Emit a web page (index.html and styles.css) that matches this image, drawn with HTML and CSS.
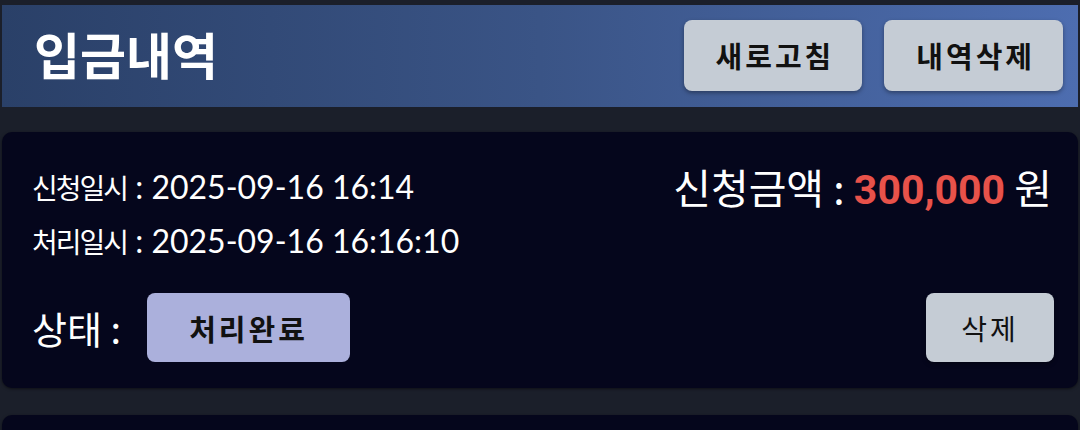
FILE: index.html
```html
<!DOCTYPE html>
<html>
<head>
    <title>입금내역</title>
    <meta name="viewport" content="width=device-width, initial-scale=1">
    <link rel="stylesheet" href="styles.css">
</head>
<body>
    <div class="header">
        <h1>입금내역</h1>
        <div class="header-actions">
            <button class="btn btn-bold">새로고침</button>
            <button class="btn btn-bold">내역삭제</button>
        </div>
    </div>

    <div class="list">
        <div class="card">
            <div class="card-top">
                <div class="dates">
                    <div class="line"><span class="label">신청일시</span> : 2025-09-16 16:14</div>
                    <div class="line"><span class="label">처리일시</span> : 2025-09-16 16:16:10</div>
                </div>
                <div class="amount">신청금액 : <span class="money">300,000</span> 원</div>
            </div>
            <div class="card-bottom">
                <div class="status">
                    <span class="status-label">상태 :</span>
                    <span class="badge">처리완료</span>
                </div>
                <button class="btn btn-small">삭제</button>
            </div>
        </div>
        <div class="card"></div>
    </div>
</body>
</html>
```

FILE: styles.css
```css
body {
    margin: 0;
    padding: 5px 2px 0;
    background-color: #1b1f2a;
    font-family: 'Lato', 'Noto Sans CJK KR', sans-serif;
    color: #ffffff;
    overflow: hidden;
}
.header {
    height: 102px;
    display: flex;
    align-items: center;
    justify-content: space-between;
    padding: 0 15px 0 32px;
    background: linear-gradient(90deg, #2a4068 0%, #3a5486 50%, #4d6db0 100%);
}
h1 {
    margin: 0;
    font-family: 'Noto Sans CJK KR', sans-serif;
    font-size: 50px;
    font-weight: bold;
    padding-bottom: 6px;
}
.header-actions {
    display: flex;
    gap: 22px;
    padding-bottom: 2px;
}
.btn {
    background-color: #c5ccd5;
    color: #111111;
    border: none;
    border-radius: 8px;
    font-family: 'Noto Sans CJK KR', sans-serif;
    font-size: 29px;
    letter-spacing: 3px;
    cursor: pointer;
    box-shadow: 0 2px 4px rgba(0, 0, 0, 0.35);
}
.btn-bold {
    height: 71px;
    padding: 0 28px 0 32px;
    font-weight: bold;
}
.list {
    padding-top: 25px;
    display: flex;
    flex-direction: column;
    gap: 27px;
}
.card {
    background-color: #05061c;
    border-radius: 10px;
    padding: 28px 24px 26px 30px;
    box-shadow: 0 1px 3px rgba(0, 0, 0, 0.5);
    min-height: 40px;
}
.card-top {
    display: flex;
    justify-content: space-between;
    align-items: flex-start;
}
.line {
    font-size: 32px;
    line-height: 53px;
}
.label {
    font-family: 'Noto Sans CJK KR', sans-serif;
    font-size: 28px;
    letter-spacing: -2px;
}
.amount {
    font-family: 'Noto Sans CJK KR', sans-serif;
    font-size: 41px;
    line-height: 53px;
    margin-right: 2px;
}
.money {
    font-family: 'Roboto', sans-serif;
    font-weight: bold;
    color: #e8524a;
}
.card-bottom {
    display: flex;
    justify-content: space-between;
    align-items: center;
    margin-top: 25px;
}
.status {
    display: flex;
    align-items: center;
    gap: 26px;
}
.status-label {
    font-family: 'Noto Sans CJK KR', sans-serif;
    font-size: 38px;
}
.badge {
    width: 203px;
    height: 69px;
    display: flex;
    align-items: center;
    justify-content: center;
    background-color: #abb0dc;
    color: #111111;
    border-radius: 8px;
    font-family: 'Noto Sans CJK KR', sans-serif;
    font-size: 29px;
    font-weight: bold;
    letter-spacing: 3px;
}
.btn-small {
    width: 128px;
    height: 69px;
    padding: 0;
    font-size: 28px;
}
```
